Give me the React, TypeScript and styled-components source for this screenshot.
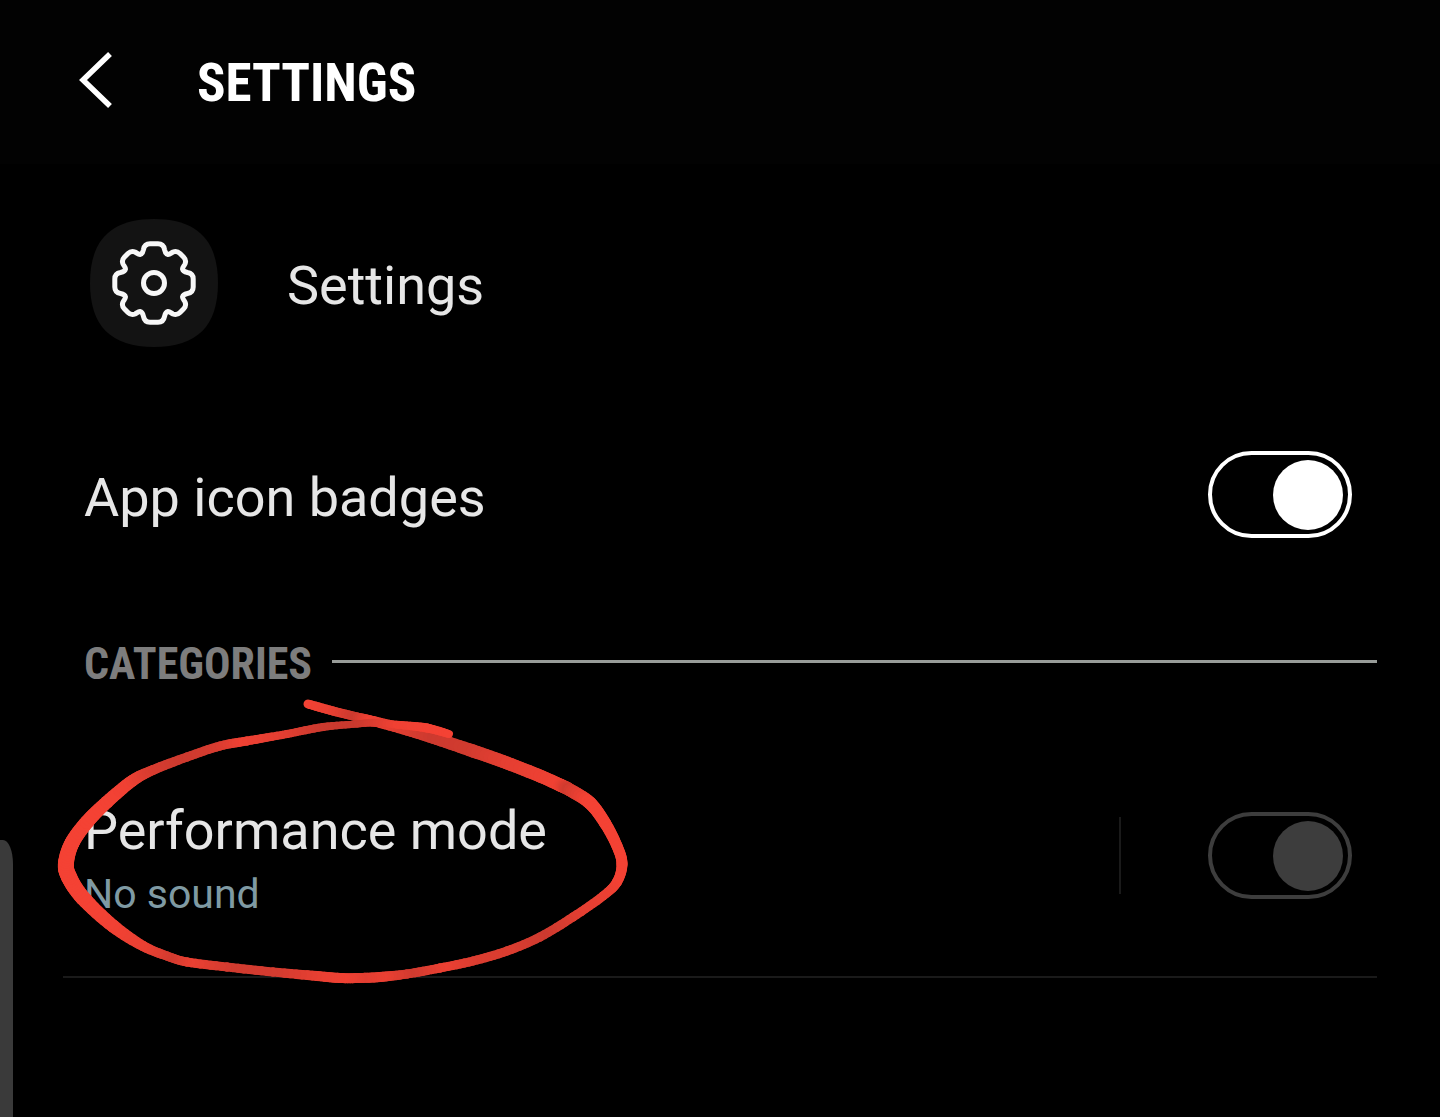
import React, { useId, useState } from "react";
import styled, { createGlobalStyle } from "styled-components";

const GlobalStyle = createGlobalStyle`
  *, *::before, *::after { box-sizing: border-box; }
  body {
    margin: 0;
    background: #000;
    color: #e6e6e6;
    font-family: Roboto, "Liberation Sans", sans-serif;
  }
`;

const Screen = styled.div`
  position: relative;
  min-height: 100vh;
  overflow: hidden;
`;

const Header = styled.header`
  display: flex;
  align-items: center;
  gap: 72px;
  height: 164px;
  padding: 0 64px;
  background: #020202;
`;

const BackButton = styled.button`
  display: flex;
  align-items: center;
  justify-content: center;
  width: 61px;
  height: 80px;
  padding: 0;
  border: 0;
  background: none;
  color: #fff;
  cursor: pointer;
`;

const Title = styled.h1`
  margin: 0;
  padding-top: 2px;
  color: #fff;
  font: 700 53px/64px "Roboto Condensed", "Liberation Sans Narrow", Roboto, sans-serif;
`;

const Row = styled.div<{ $height: number }>`
  display: flex;
  align-items: center;
  justify-content: space-between;
  min-height: ${(p) => p.$height}px;
  padding: 0 88px 0 84px;
`;

const AppRow = styled(Row)`
  justify-content: flex-start;
  gap: 69px;
  padding-left: 90px;
`;

const Label = styled.label`
  padding-top: 6px;
  font-size: 54px;
  line-height: 64px;
`;

const AppName = styled.h2`
  margin: 0;
  padding-top: 6px;
  font-size: 54px;
  line-height: 64px;
  font-weight: 400;
`;

const SectionHead = styled.div`
  display: flex;
  align-items: center;
  gap: 20px;
  height: 148px;
  padding: 0 63px 0 84px;
`;

const SectionTitle = styled.h3`
  margin: 0;
  padding-top: 6px;
  color: #7d7d7d;
  font: 700 44px/52px "Roboto Condensed", "Liberation Sans Narrow", Roboto, sans-serif;
`;

const SectionRule = styled.hr`
  flex: 1;
  height: 3px;
  margin: 0;
  border: 0;
  background: #989c99;
`;

const CategoryItem = styled.section`
  position: relative;
  margin: 0 63px;
  border-bottom: 2px solid #1a1a1a;
`;

const CategoryRow = styled(Row)`
  padding: 0 25px 0 21px;
`;

const TextStack = styled.div`
  display: flex;
  flex-direction: column;
  gap: 5px;
  padding-top: 2px;
`;

const Subtitle = styled.span`
  color: #7f9aa3;
  font-size: 41px;
  line-height: 52px;
`;

const SwitchGroup = styled.div`
  display: flex;
  align-items: center;
  gap: 87px;
`;

const Divider = styled.span`
  width: 2px;
  height: 77px;
  background: #1a1a1a;
`;

const Switch = styled.input<{ $color: string }>`
  appearance: none;
  display: flex;
  align-items: center;
  justify-content: flex-start;
  width: 144px;
  height: 87px;
  margin: 0;
  padding: 0 5px;
  border: 4px solid ${(p) => p.$color};
  border-radius: 44px;
  cursor: pointer;

  &:checked { justify-content: flex-end; }

  &::before {
    content: "";
    width: 70px;
    height: 70px;
    border-radius: 50%;
    background: ${(p) => p.$color};
  }
`;

const EdgeHandle = styled.div`
  position: absolute;
  top: 840px;
  bottom: 0;
  left: 0;
  width: 13px;
  border-top-right-radius: 10px 24px;
  background: #3a3a3a;
`;

const Scribble = styled.svg`
  position: absolute;
  top: -45px;
  left: -13px;
  pointer-events: none;
`;

/* An upright tooth and its diagonal neighbour, repeated every quarter turn. */
const teeth: [number, number][] = [
  [-11.5, -29], [-11, -31], [-10.5, -33.5],
  [-9.8, -37.5], [-7, -39.2], [-4, -39.2],
  [-2, -39.2], [2, -39.2], [4, -39.2],
  [7, -39.2], [9.8, -37.5], [10.5, -33.5],
  [11, -31], [11.5, -29], [14, -28.5],
  [16, -28.6], [17, -30], [19, -31],
  [22, -32.3], [24, -31.5], [26, -29.5],
  [27, -28.5], [28.5, -27], [29.5, -26],
  [31.5, -24], [32.3, -22], [31, -19],
  [30, -17], [28.6, -16], [28.5, -14],
];

const rotate = ([x, y]: [number, number], k: number) => {
  const a = (k * Math.PI) / 2;
  return `${(x * Math.cos(a) - y * Math.sin(a)).toFixed(2)} ${(x * Math.sin(a) + y * Math.cos(a)).toFixed(2)}`;
};

const gearPath =
  "M-14 -28.5" +
  Array.from({ length: 4 }, (_, k) => "C" + teeth.map((p) => rotate(p, k)).join(" ")).join("") +
  "Z";

const GearIcon = () => (
  <svg width="128" height="128" viewBox="-64 -64 128 128" aria-hidden="true">
    <path
      d="M0 -64C43 -64 64 -43 64 0C64 43 43 64 0 64C-43 64 -64 43 -64 0C-64 -43 -43 -64 0 -64Z"
      fill="#131313"
    />
    <g fill="none" stroke="#f7f7f7" strokeWidth="5" strokeLinejoin="round">
      <path d={gearPath} />
      <circle r="10.5" />
    </g>
  </svg>
);

/* Pen samples: x, y, width, brightness. */
type Sample = [number, number, number, number];
const pen: Sample[] = [
  [308, 704, 9, 1], [333, 711, 9, 0.8], [357, 717, 9, 0.1], [373, 721, 10, 0.9],
  [407, 730, 11, 0.5], [437, 739, 12, 0.1], [473, 751, 13, 0.2], [507, 763, 13, 0.6],
  [540, 776, 13, 0.8], [560, 785, 13, 0.9], [570, 790, 13, 0.2], [590, 803, 13, 1],
  [605, 823, 12, 1], [617, 846, 11, 1], [622, 864, 11, 1], [617, 882, 10, 1],
  [603, 896, 9, 0.8], [573, 917, 9, 0.6], [540, 937, 9, 0.1], [507, 951, 9, 0.4],
  [473, 961, 9, 0.4], [440, 968, 9, 0.8], [407, 974, 9, 0.2], [380, 977, 10, 0.8],
  [360, 978, 10, 0.6], [340, 978, 10, 0.9], [317, 976, 10, 0.8], [273, 972, 9, 0.3],
  [227, 967, 9, 0.2], [187, 962, 9, 0.8], [167, 956, 9, 0.2], [143, 946, 10, 0.7],
  [113, 926, 13, 0.9], [83, 898, 15, 1], [69, 877, 16, 1], [66, 863, 16, 1],
  [72, 843, 15, 1], [87, 822, 14, 1], [107, 802, 13, 1], [132, 781, 12, 0.9],
  [153, 770, 10, 0.4], [187, 757, 9, 0.1], [220, 746, 9, 0.3], [247, 741, 9, 0.9],
  [287, 734, 8, 0.6], [323, 727, 8, 0.1], [357, 724, 7, 0], [373, 723, 7, 0.3],
  [400, 725, 8, 0.9], [427, 728, 9, 1], [449, 734, 8, 1],
];

const spline = (a: number, b: number, c: number, d: number, t: number) =>
  0.5 * (2 * b + (c - a) * t + (2 * a - 5 * b + 4 * c - d) * t * t + (3 * b - a - 3 * c + d) * t * t * t);

const smooth = (points: Sample[], steps: number): Sample[] =>
  points.slice(0, -1).flatMap((p, i) => {
    const before = points[Math.max(i - 1, 0)];
    const next = points[i + 1];
    const after = points[Math.min(i + 2, points.length - 1)];
    return Array.from({ length: steps + 1 }, (_, s) => {
      const t = s / steps;
      return [
        spline(before[0], p[0], next[0], after[0], t),
        spline(before[1], p[1], next[1], after[1], t),
        p[2] + (next[2] - p[2]) * t,
        p[3] + (next[3] - p[3]) * t,
      ] as Sample;
    });
  });

const stroke = smooth(pen, 8);
const ink = (b: number) =>
  `rgb(${Math.round(200 + 44 * b)}, ${Math.round(57 + 9 * b)}, ${Math.round(46 + 6 * b)})`;

const PenCircle = () => (
  <Scribble width="600" height="300" viewBox="50 690 600 300" aria-hidden="true">
    {stroke.slice(1).map((p, i) => (
      <line
        key={i}
        x1={stroke[i][0]}
        y1={stroke[i][1]}
        x2={p[0]}
        y2={p[1]}
        stroke={ink(p[3])}
        strokeWidth={p[2]}
        strokeLinecap="round"
      />
    ))}
  </Scribble>
);

export default function App() {
  const [badges, setBadges] = useState(true);
  const [performance, setPerformance] = useState(true);
  const badgesId = useId();
  const performanceId = useId();

  return (
    <Screen>
      <GlobalStyle />
      <Header>
        <BackButton type="button" aria-label="Back">
          <svg width="36" height="60" viewBox="0 0 36 60" aria-hidden="true">
            <path d="M33 2L6 28L33 54" fill="none" stroke="currentColor" strokeWidth="5.5" />
          </svg>
        </BackButton>
        <Title>SETTINGS</Title>
      </Header>
      <main>
        <AppRow $height={238}>
          <GearIcon />
          <AppName>Settings</AppName>
        </AppRow>
        <Row $height={185}>
          <Label htmlFor={badgesId}>App icon badges</Label>
          <Switch
            id={badgesId}
            type="checkbox"
            $color="#fff"
            checked={badges}
            onChange={(e) => setBadges(e.target.checked)}
          />
        </Row>
        <SectionHead>
          <SectionTitle>CATEGORIES</SectionTitle>
          <SectionRule />
        </SectionHead>
        <CategoryItem>
          <CategoryRow $height={241}>
            <TextStack>
              <Label htmlFor={performanceId}>Performance mode</Label>
              <Subtitle>No sound</Subtitle>
            </TextStack>
            <SwitchGroup>
              <Divider />
              <Switch
                id={performanceId}
                type="checkbox"
                $color="#3d3d3d"
                checked={performance}
                onChange={(e) => setPerformance(e.target.checked)}
              />
            </SwitchGroup>
          </CategoryRow>
          <PenCircle />
        </CategoryItem>
      </main>
      <EdgeHandle />
    </Screen>
  );
}
